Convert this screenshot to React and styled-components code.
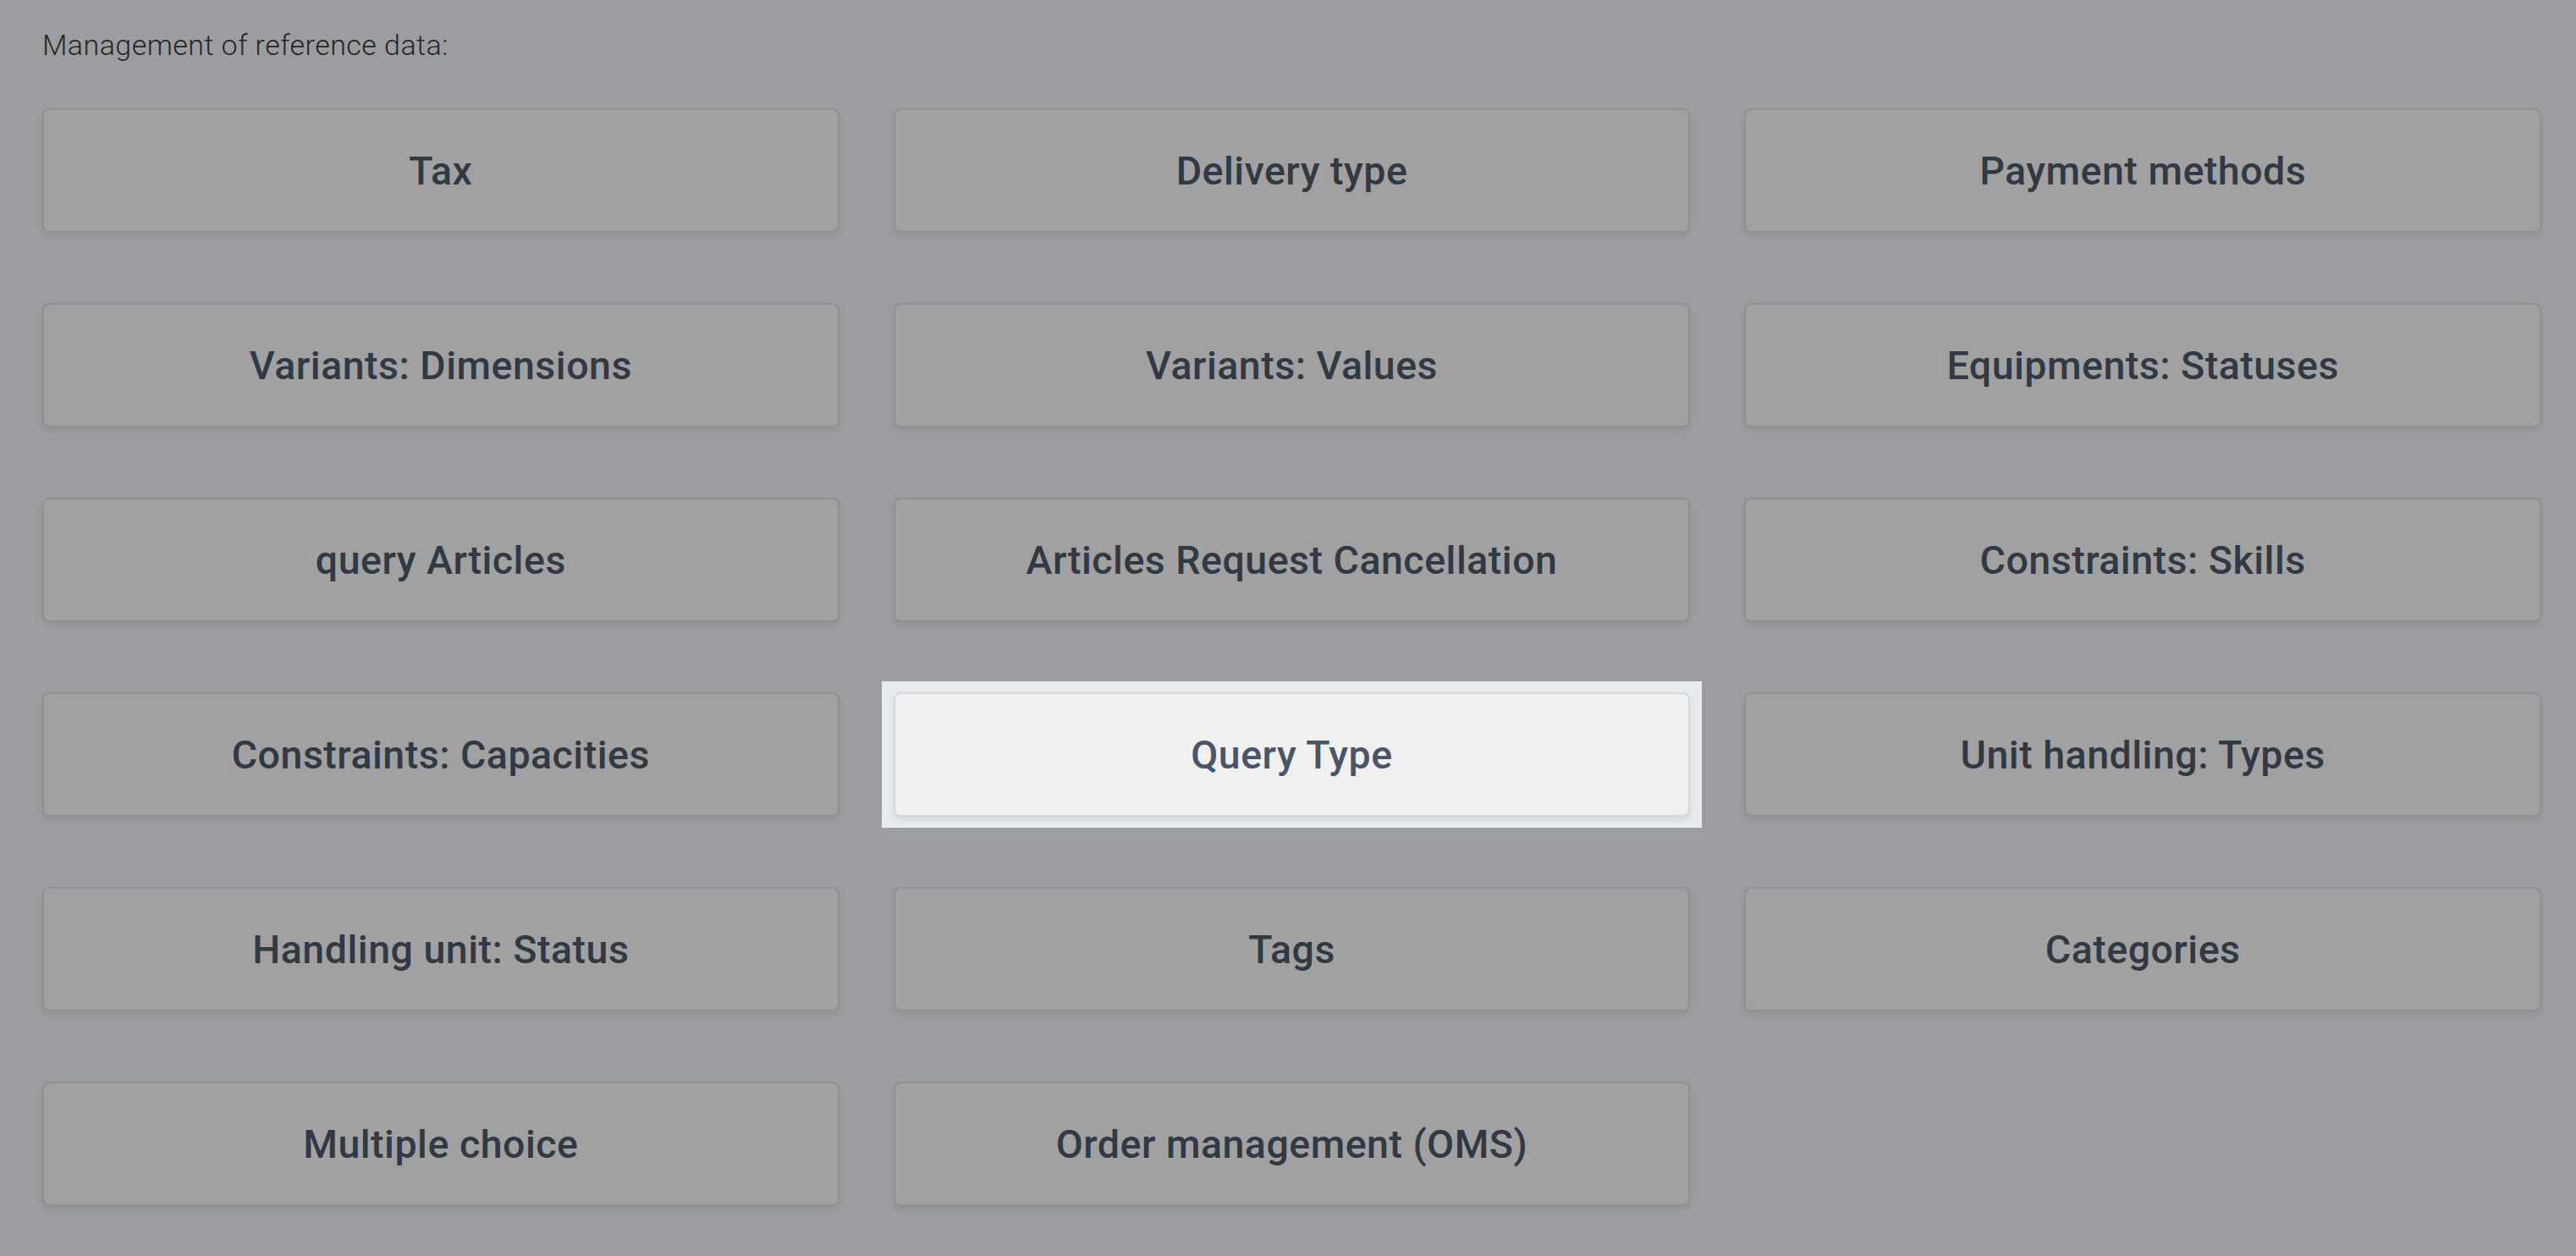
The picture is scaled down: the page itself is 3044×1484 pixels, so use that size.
import React from "react";
import styled, { createGlobalStyle } from "styled-components";

const GlobalStyle = createGlobalStyle`
  html, body {
    margin: 0;
    padding: 0;
    background: #e8ebef;
    overflow: hidden;
  }
  body {
    font-family: Roboto, "Open Sans", sans-serif;
  }
`;

const Page = styled.div`
  min-height: 1484px;
  box-sizing: border-box;
  padding: 30px 41px 0 50px;
`;

const Title = styled.p`
  margin: 0 0 52px;
  font-size: 34px;
  line-height: 46px;
  font-weight: 300;
  letter-spacing: 0.45px;
  color: #383838;
`;

const Grid = styled.div`
  display: grid;
  grid-template-columns: repeat(3, 1fr);
  grid-auto-rows: 147px;
  column-gap: 64px;
  row-gap: 83px;
`;

const Cell = styled.div`
  position: relative;
  z-index: ${(p) => (p.$active ? 2 : "auto")};

  ${(p) =>
    p.$active &&
    `
    &::before {
      content: "";
      position: absolute;
      inset: -13px -14px;
      background: #e8ebef;
      box-shadow: 0 0 0 4000px rgba(0, 0, 0, 0.33);
      z-index: 0;
    }
  `}
`;

const Tile = styled.button`
  position: relative;
  z-index: 1;
  width: 100%;
  height: 100%;
  box-sizing: border-box;
  display: flex;
  align-items: center;
  justify-content: center;
  background: #f0f0f0;
  border: 2px solid #d2d7dd;
  border-radius: 8px;
  box-shadow: 0 4px 8px rgba(0, 0, 0, 0.08);
  font-family: Roboto, "Open Sans", sans-serif;
  font-size: 46.5px;
  font-weight: 500;
  letter-spacing: 0.5px;
  color: #4a5568;
  cursor: pointer;
`;

const items = [
  "Tax",
  "Delivery type",
  "Payment methods",
  "Variants: Dimensions",
  "Variants: Values",
  "Equipments: Statuses",
  "query Articles",
  "Articles Request Cancellation",
  "Constraints: Skills",
  "Constraints: Capacities",
  "Query Type",
  "Unit handling: Types",
  "Handling unit: Status",
  "Tags",
  "Categories",
  "Multiple choice",
  "Order management (OMS)",
];

const App = () => {
  return (
    <>
      <GlobalStyle />
      <Page>
        <Title>Management of reference data:</Title>
        <Grid>
          {items.map((label) => (
            <Cell key={label} $active={label === "Query Type"}>
              <Tile>{label}</Tile>
            </Cell>
          ))}
        </Grid>
      </Page>
    </>
  );
};

export default App;
